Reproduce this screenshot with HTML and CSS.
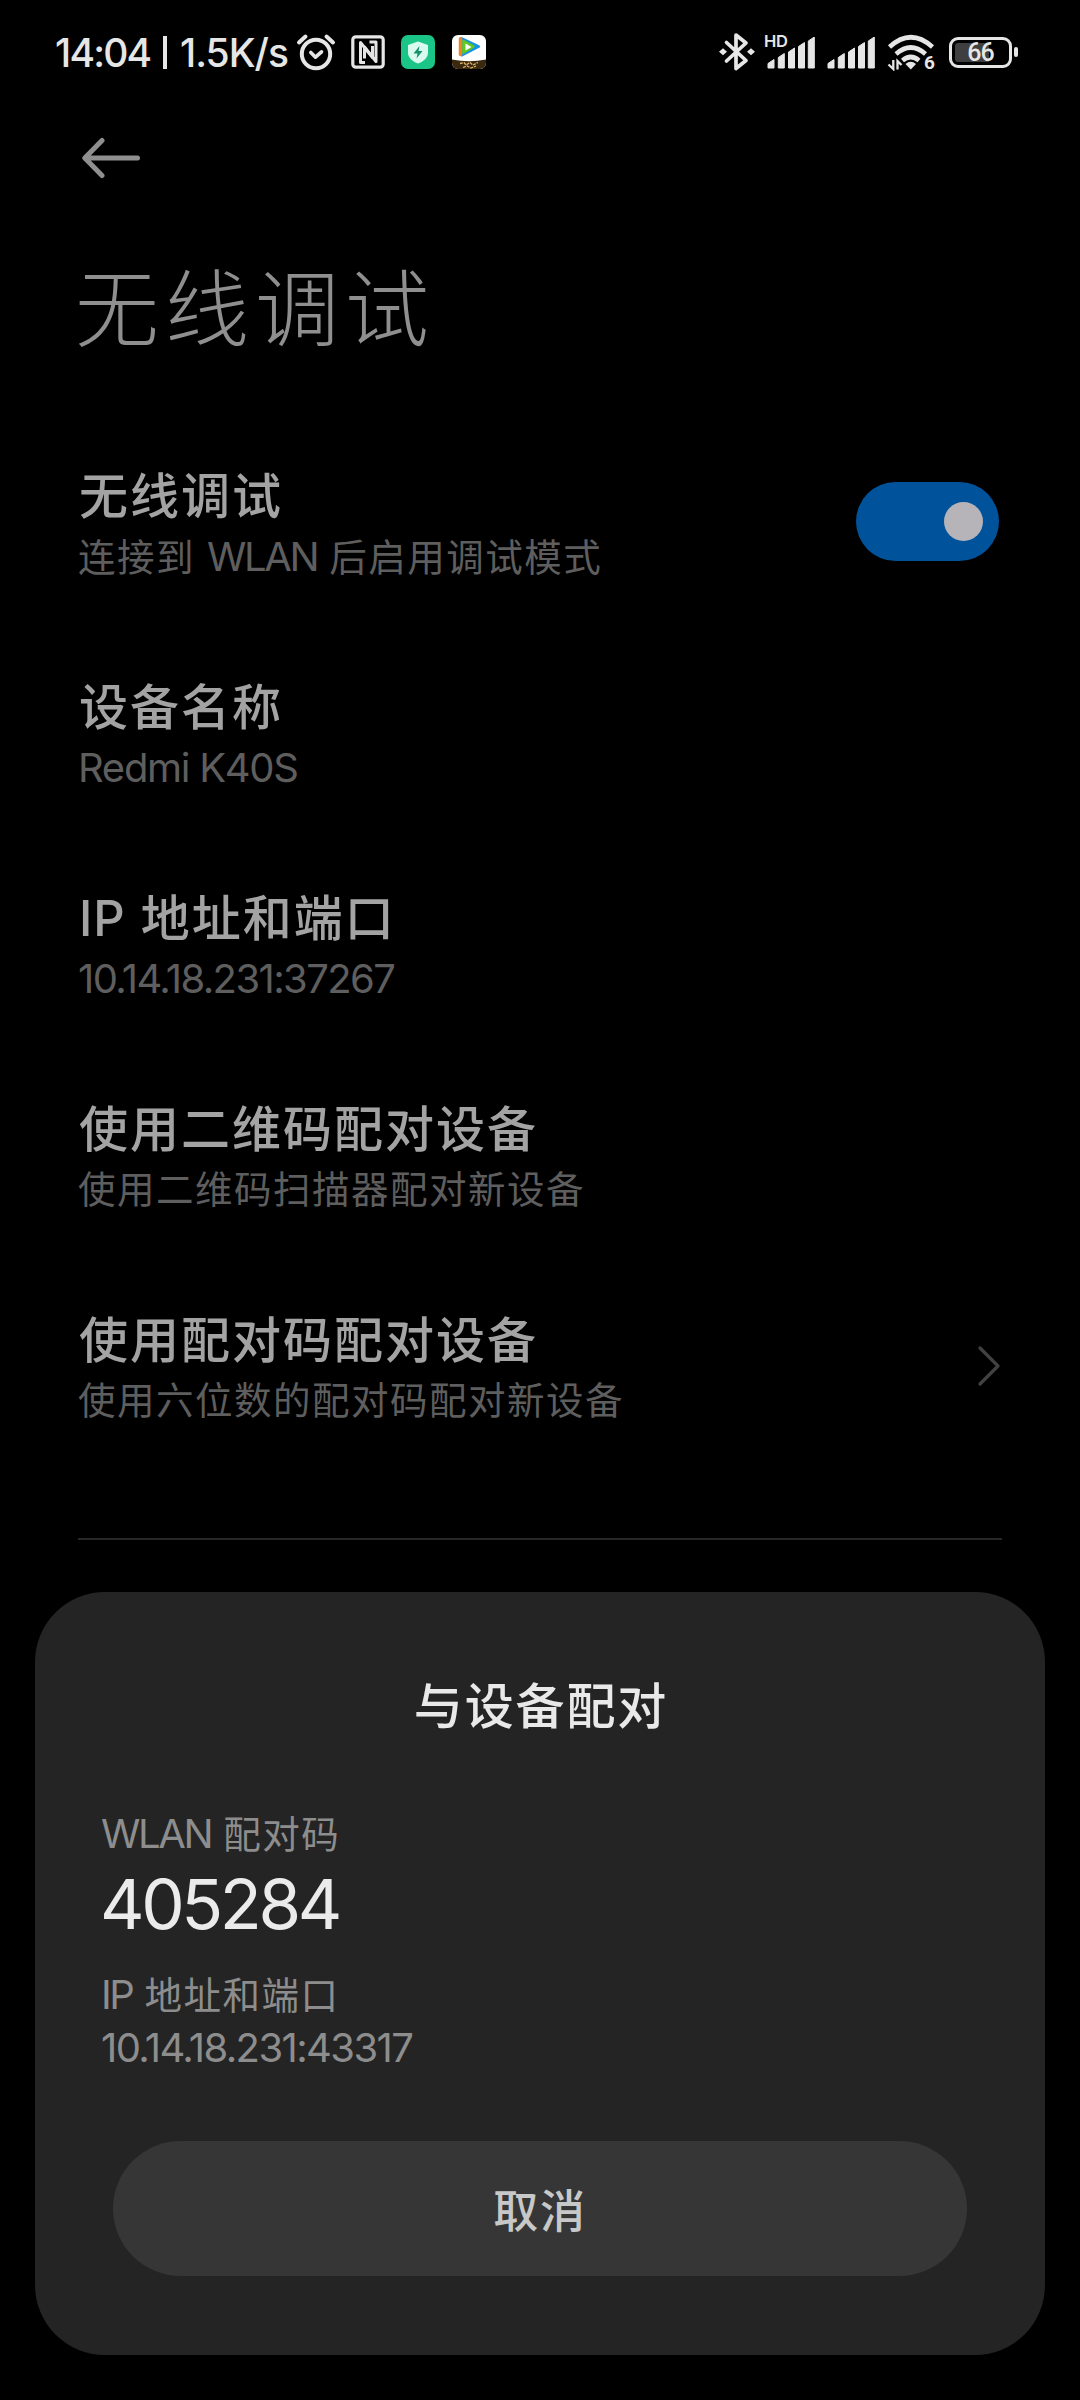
FILE: index.html
```html
<!DOCTYPE html>
<html lang="zh-CN">
<head>
<meta charset="utf-8">
<title>无线调试</title>
<link rel="stylesheet" href="styles.css">
</head>
<body>
<div class="screen">
  <header class="status">
    <span class="clock">14:04</span><span class="bar"></span><span class="speed">1.5K/s</span>
    <svg class="alarm" width="40" height="38" viewBox="0 0 40 38" fill="none" stroke="#e6e6e6" stroke-width="4" stroke-linecap="round" stroke-linejoin="round"><circle cx="20" cy="21" r="14.2"/><path d="M3 9.5 9.5 3.5M37 9.5 30.500 3.500"/><path d="M14.800 19.500 19.500 24.200 25.500 18.800" stroke-width="3.600"/></svg>
    <svg class="nfc" width="34" height="34" viewBox="0 0 34 34" fill="none" stroke="#e6e6e6" stroke-linejoin="round"><rect x="1.800" y="1.800" width="30.400" height="30.400" rx="3" stroke-width="3.200"/><path d="M14 27.500H9.500V7.500L21.500 22.500V11" stroke-width="3"/><path d="M18.500 7H25V26.500L13.500 12V23.500" stroke-width="3"/></svg>
    <svg class="shield" width="34" height="34" viewBox="0 0 34 34"><rect width="34" height="34" rx="7" fill="#1bc588"/><path d="M17 6.500 27 10V17.500C27 23 22.500 26.500 17 28.500 11.500 26.500 7 23 7 17.500V10Z" fill="#d9fbef"/><path d="M18.500 11 12.500 18.500H16.500L15.500 23.500 21.500 16H17.500Z" fill="#14916a"/></svg>
    <svg class="video" width="34" height="34" viewBox="0 0 34 34"><clipPath id="tile"><rect width="34" height="34" rx="6"/></clipPath><g clip-path="url(#tile)"><rect width="34" height="34" fill="#fff"/><path d="M0 24.500Q17 28 34 24.500V34H0Z" fill="#3a280f"/><path d="M8 28.500 12 27.500 14 30 18 27.500 21 30 26 27.500M11 32.500 15 31 19 33 24 31" stroke="#dcb26a" stroke-width="1.300" stroke-dasharray="3 1" fill="none"/><path d="M9.500 3.500 26.500 11.500 10 20Z" fill="#1793e6" stroke="#1793e6" stroke-width="3" stroke-linejoin="round"/><path d="M8.500 3.800V19.500" stroke="#f58220" stroke-width="3.500" stroke-linecap="round"/><path d="M11.500 6 21.500 11.500 11.500 17.500Z" fill="#61c91e" stroke="#61c91e" stroke-width="2.500" stroke-linejoin="round"/><path d="M13.500 8.500 19.500 12 13.500 15.500Z" fill="#fff"/></g></svg>
    <span class="spacer"></span>
    <svg class="bt" width="38" height="40" viewBox="0 0 38 40" fill="none" stroke="#e6e6e6" stroke-width="3.700" stroke-linejoin="round" stroke-linecap="round"><path d="M8.500 10.500 28 28.500 18 36.500V3L28 11 8.500 29"/><g fill="#e6e6e6" stroke="none"><path d="M1 19.800 5 16.300 9 19.800 5 23.300ZM29 19.800 33 16.300 37 19.800 33 23.300Z"/></g></svg>
    <span class="signal"><span class="hd">HD</span><svg width="49" height="32" viewBox="0 0 49 32" fill="#e6e6e6"><path id="sig" d="M1 26.500 7 22.500V31H1ZM11.300 20.500 17.300 16.500V31H11.300ZM21.500 15 27.500 11V31H21.500ZM31.500 9.500 37.500 5.500V31H31.500ZM41.300 4 47.300 0V31H41.300Z" stroke="#e6e6e6" stroke-width="1" stroke-linejoin="round"/></svg></span>
    <svg class="sig2" width="49" height="32" viewBox="0 0 49 32" fill="#e6e6e6"><use href="#sig"/></svg>
    <span class="wifi"><svg width="48" height="37" viewBox="0 0 48 37" fill="none" stroke="#e6e6e6" stroke-width="4.600"><path d="M2.500 13Q23.800-6.500 45.500 13"/><path d="M9 20Q23.800 7 38.500 20"/><path d="M15.500 26.500Q23.800 19.500 32 26.500"/><path d="M18.500 30Q23.800 25.500 29 30L23.800 35.500Z" fill="#e6e6e6" stroke="none"/><path d="M6.300 26V35L1.500 30.500M10.500 35.500V27L14.500 31" stroke-width="2.300"/></svg><span class="gen">6</span></span>
    <span class="battery"><span class="level">66</span></span><span class="tip"></span>
  </header>

  <svg class="back" width="60" height="42" viewBox="0 0 60 42" fill="none" stroke="#8f8f8f" stroke-width="5" stroke-linecap="round" stroke-linejoin="round"><path d="M56.500 21H4.500M21 3.500 3.800 21 21 38.500"/></svg>

  <main class="page">
    <h1 class="heading">无线调试</h1>
    <section class="row">
      <div class="texts"><h2 class="name">无线调试</h2><p class="sub">连接到 <span class="lat">WLAN</span> 后启用调试模式</p></div>
      <span class="toggle"></span>
    </section>
    <section class="row"><div class="texts"><h2 class="name">设备名称</h2><p class="sub"><span class="lat device">Redmi K40S</span></p></div></section>
    <section class="row"><div class="texts"><h2 class="name"><span class="latb">IP</span> 地址和端口</h2><p class="sub"><span class="lat num">10.14.18.231:37267</span></p></div></section>
    <section class="row"><div class="texts"><h2 class="name">使用二维码配对设备</h2><p class="sub">使用二维码扫描器配对新设备</p></div></section>
    <section class="row">
      <div class="texts"><h2 class="name">使用配对码配对设备</h2><p class="sub">使用六位数的配对码配对新设备</p></div>
      <svg class="chevron" width="26" height="44" viewBox="0 0 26 44" fill="none" stroke="#414141" stroke-width="3.200" stroke-linecap="round" stroke-linejoin="round"><path d="M4 4 22 22 4 40"/></svg>
    </section>
    <div class="divider"></div>
  </main>

  <section class="dialog">
    <h2 class="dtitle">与设备配对</h2>
    <p class="label"><span class="lat">WLAN</span> 配对码</p>
    <p class="code">405284</p>
    <p class="label ip"><span class="lat">IP</span> 地址和端口</p>
    <p class="label addr"><span class="lat num">10.14.18.231:43317</span></p>
    <button class="cancel">取消</button>
  </section>
</div>
</body>
</html>
```
FILE: styles.css
```css
* { box-sizing: border-box; margin: 0; padding: 0; }
body { background: #000; }
.screen {
  width: 1080px; height: 2400px; overflow: hidden; background: #000;
  display: flex; flex-direction: column;
  font-family: Inter, "Noto Sans CJK SC", sans-serif;
}
.status {
  height: 104px; flex: none; display: flex; align-items: center;
  padding: 0 62px 0 55px; color: #e6e6e6; font-size: 39px; font-weight: 500;
}
.status svg, .status span { flex: none; }
.clock { width: 108px; letter-spacing: -1.8px; }
.bar { width: 4px; height: 33px; background: #e6e6e6; }
.speed { width: 125px; padding-left: 13px; letter-spacing: -1px; }
.alarm { margin-left: 4px; }
.nfc { margin-left: 15px; }
.shield { margin-left: 16px; }
.video { margin-left: 17px; }
.status .spacer { flex: 1; }
.bt { margin-right: 11px; }
.signal { position: relative; height: 32px; display: flex; margin-top: 2px; }
.hd { position: absolute; left: -3px; top: -6px; font-size: 16.500px; line-height: 20px; font-weight: 600; letter-spacing: -0.3px; }
.sig2 { margin: 2px 0 0 11px; }
.wifi { position: relative; height: 37px; display: flex; margin: 0 0 0 11px; }
.gen { position: absolute; left: 37px; top: 20px; font-family: Roboto, sans-serif; font-size: 19px; line-height: 18px; font-weight: 700; }
.battery {
  width: 63px; height: 31px; margin-left: 14px; border: 3px solid #e6e6e6; border-radius: 9px; padding: 3px;
}
.level {
  display: block; height: 19px; line-height: 20px; border-radius: 3px; text-align: center;
  font-family: Roboto, sans-serif; font-size: 25px; letter-spacing: -1px;
  background: linear-gradient(90deg, #3f3f3f 66%, transparent 66%);
}
.tip { width: 4px; height: 10px; margin-left: 2px; border-radius: 2px; background: #e6e6e6; }
.back { flex: none; margin: 33px 0 0 81px; }
.page { padding: 0 78px; }
.heading {
  height: 130px; margin: 66px 0 92px -3px; line-height: 130px;
  font-size: 84px; font-weight: 300; letter-spacing: 6px; color: #8f8f8f;
}
.row { height: 211px; display: flex; justify-content: space-between; align-items: flex-start; }
.name { height: 60px; line-height: 60px; font-size: 49px; font-weight: 500; letter-spacing: 2px; color: #a3a3a3; padding-left: 1px; }
.sub { height: 60px; line-height: 60px; font-size: 37.500px; font-weight: 400; letter-spacing: 1.5px; color: #5e5e5e; white-space: nowrap; }
.lat { font-size: 40px; letter-spacing: -2.4px; }
.lat.device { letter-spacing: -1.3px; }
.lat.num { letter-spacing: -1.6px; }
.latb { letter-spacing: 1px; }
.toggle {
  width: 143px; height: 79px; margin: 15px 3px 0 0; padding: 20px 16px; border-radius: 40px; background: #00529a;
  display: flex; justify-content: flex-end;
}
.toggle::after { content: ""; width: 39px; height: 39px; border-radius: 50%; background: #b6b4b8; }
.chevron { margin: 33px 0 0; }
.divider { height: 2px; background: #272727; margin-top: 16px; }
.dialog {
  flex: none; width: 1010px; height: 763px; margin: 52px 0 0 35px; padding: 85px 66px 0; border-radius: 70px;
  background: #242424; display: flex; flex-direction: column;
}
.dtitle { height: 60px; line-height: 60px; text-align: center; font-size: 49px; font-weight: 500; letter-spacing: 1.9px; color: #e9e9e9; padding-left: 2px; }
.label { height: 52px; line-height: 52px; margin-top: 71px; font-size: 37.500px; font-weight: 400; letter-spacing: 1.5px; color: #8d8d8d; }
.code { height: 80px; line-height: 80px; margin: 4px 0 0 -1px; font-size: 69px; font-weight: 400; letter-spacing: -3.400px; color: #ebebeb; }
.label.ip { margin-top: 25px; }
.label.addr { margin-top: 1px; }
.cancel {
  width: 854px; height: 135px; margin: 67px 0 0 12px; border: 0; border-radius: 68px; background: #363636;
  font: 500 45px Inter, "Noto Sans CJK SC", sans-serif; letter-spacing: 1.7px; color: #c8c8c8;
}
```
